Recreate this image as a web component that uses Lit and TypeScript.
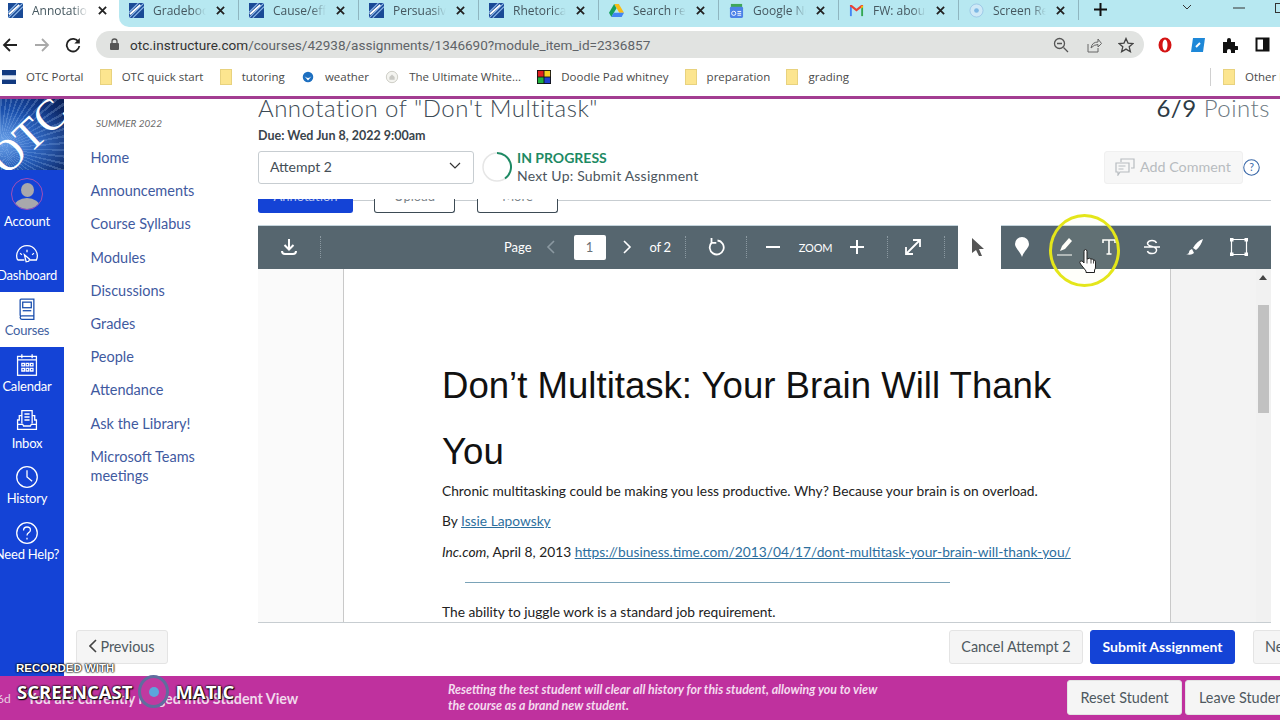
import { LitElement, css, html, svg } from "lit";
import { customElement } from "lit/decorators.js";

const otcFavicon = html`<svg class="fav" viewBox="0 0 16 16"><rect width="16" height="16" fill="#1a4a96"/><path d="M0 16 16 0M4 16 16 4M0 10 10 0" stroke="#8fb8e8" stroke-width="1.2"/><path d="M1 12 12 2" stroke="#fff" stroke-width="2"/></svg>`;

const driveIcon = html`<svg class="fav" viewBox="0 0 16 16"><path d="M5.500 1h5L16 10.500h-5z" fill="#f9bc15"/><path d="M5.500 1 0 10.500 2.500 15 8 5.500z" fill="#16a05d"/><path d="M2.500 15h11l2.500-4.500H5z" fill="#4285f4"/></svg>`;
const newsIcon = html`<svg class="fav" viewBox="0 0 16 16"><rect x="2" y="1" width="12" height="5" fill="#3fa757"/><rect x="1" y="4" width="14" height="12" rx="1.500" fill="#4c82e8"/><path d="M9 9h4M9 11h4M9 13h4" stroke="#fff"/><circle cx="5" cy="11" r="2.200" fill="none" stroke="#fff"/></svg>`;
const gmailIcon = html`<svg class="fav" viewBox="0 0 16 16"><path d="M1 14V3l2 0 0 11z" fill="#4285f4"/><path d="M13 14V3h2v11z" fill="#34a853"/><path d="M1 3.500 8 9l7-5.500V2l-2 0-5 4-5-4H1z" fill="#ea4335"/><path d="M13 3h2v1.500l-2 1.500z" fill="#fbbc05"/></svg>`;
const screenIcon = html`<svg class="fav" viewBox="0 0 16 16"><circle cx="8" cy="8" r="7" fill="#cfe9f7" stroke="#9cc8e6"/><circle cx="8" cy="8" r="2.500" fill="#7db8e4"/></svg>`;

const folder = html`<svg class="bm-ico" viewBox="0 0 12 16"><rect x="0.500" y="0.500" width="11" height="15" fill="#fce58f" stroke="#e8d27e"/></svg>`;

const tabs = [
  { title: "Gradebook", icon: otcFavicon },
  { title: "Cause/effect", icon: otcFavicon },
  { title: "Persuasive", icon: otcFavicon },
  { title: "Rhetorical", icon: otcFavicon },
  { title: "Search results", icon: driveIcon },
  { title: "Google News", icon: newsIcon },
  { title: "FW: about it", icon: gmailIcon },
  { title: "Screen Recorder", icon: screenIcon },
];

const bookmarks = [
  { label: "OTC Portal", icon: html`<svg class="bm-ico wide" viewBox="0 0 16 16"><rect width="16" height="16" fill="#123a80"/><rect y="6" width="16" height="5" fill="#e8eef8"/></svg>` },
  { label: "OTC quick start", icon: folder },
  { label: "tutoring", icon: folder },
  { label: "weather", icon: html`<svg class="bm-ico wide" viewBox="0 0 16 16"><circle cx="8" cy="8" r="6" fill="#1d6fc0"/><path d="M4 7q4 4 8 0l-4 5z" fill="#fff"/></svg>` },
  { label: "The Ultimate White...", icon: html`<svg class="bm-ico wide" viewBox="0 0 16 16"><circle cx="8" cy="8" r="6.500" fill="#f4f4f0" stroke="#c8c8c0"/><path d="M5 11V8l3-3 3 3v3z" fill="#c9c9c4"/></svg>` },
  { label: "Doodle Pad whitney", icon: html`<svg class="bm-ico wide" viewBox="0 0 16 16"><rect width="16" height="16" fill="#111"/><rect x="1" y="1" width="6.500" height="6.500" fill="#e02020"/><rect x="8.500" y="1" width="6.500" height="6.500" fill="#f4d020"/><rect x="1" y="8.500" width="6.500" height="6.500" fill="#20b040"/><rect x="8.500" y="8.500" width="6.500" height="6.500" fill="#2040d0"/></svg>` },
  { label: "preparation", icon: folder },
  { label: "grading", icon: folder },
];

const navIcons = {
  dashboard: svg`<path d="M3 21A12 12 0 1 1 25 21H17M3 21H11" /><path d="M14 9v3M6 13l2 2M22 13l-2 2" /><path d="M11 15l6 5-1 2.500-3 .5z" />`,
  courses: svg`<path d="M6 22V3.500q0-1 1-1H22V22H8q-2 0-2 2t2 2H22v-4" /><rect x="9" y="6" width="10" height="6.500" /><path d="M9 16h10" />`,
  calendar: svg`<rect x="3" y="4" width="22" height="22" /><path d="M3 8h22M8 1.500V6M20 1.500V6" /><path d="M8 12h3v3H8zM13 12h3v3h-3zM18 12h3v3h-3zM8 18h3v3H8zM13 18h3v3h-3zM18 18h3v3h-3z" />`,
  inbox: svg`<path d="M8 18V3h12v15M11 7h6M11 10.500h6M11 14h6" /><path d="M8 9H5v5H3v11h22V14h-2V9h-3M3 19h6l1 2h8l1-2h6" />`,
  history: svg`<circle cx="14" cy="14" r="12" /><path d="M14 6v8l6 5" />`,
  help: svg`<circle cx="14" cy="14" r="12" /><path d="M10 11q0-4 4-4t4 3.500q0 2-2 3t-2 3.500M14 19.500v2" />`,
};

const courseLinks = ["Home", "Announcements", "Course Syllabus", "Modules", "Discussions", "Grades", "People", "Attendance", "Ask the Library!", "Microsoft Teams meetings"];

@customElement("app-root")
export class AppRoot extends LitElement {
  static styles = css`
    :host {
      display: block;
      width: 1280px;
      height: 720px;
      overflow: hidden;
      position: relative;
      background: #fff;
      font-family: Lato, "Liberation Sans", sans-serif;
      color: #2d3b45;
    }
    .page {
      display: flex;
      flex-direction: column;
      height: 720px;
    }

    /* browser chrome */
    .tabstrip {
      display: flex;
      height: 27px;
      background: #fff;
      flex: none;
    }
    .tab {
      box-sizing: border-box;
      width: 120px;
      height: 20px;
      flex: none;
      display: flex;
      align-items: center;
      padding: 0 13px 0 10px;
      gap: 9px;
      font-family: "Open Sans", sans-serif;
      font-size: 12px;
      color: #45575f;
      border-right: 1px solid #8fb6c0;
    }
    .tab.first {
      width: 119px;
      border-right: 0;
      padding: 0 12px 0 8px;
    }
    .tab-rest {
      flex: 1;
      min-width: 0;
      height: 27px;
      display: flex;
      background: #b7e8f1;
      border-bottom-left-radius: 10px;
      overflow: hidden;
    }
    .tab .name {
      flex: 1;
      min-width: 0;
      overflow: hidden;
      white-space: nowrap;
      -webkit-mask-image: linear-gradient(to right, #000 72%, transparent 98%);
      mask-image: linear-gradient(to right, #000 72%, transparent 98%);
    }
    .fav { width: 15px; height: 15px; flex: none; }
    .x { width: 9px; height: 9px; flex: none; }
    .newtab { margin: 3px 0 0 15px; width: 13px; height: 13px; flex: none; }
    .chev { margin: 4px 0 0 75px; flex: none; }
    .minim { margin: 7px 0 0 41px; flex: none; }
    .restore { margin: 3px 0 0 30px; flex: none; }

    .toolbar {
      flex: none;
      height: 35px;
      background: #fff;
      display: flex;
      align-items: center;
      box-sizing: border-box;
    }
    .navbtns { display: flex; width: 96px; flex: none; padding-left: 2px; box-sizing: border-box; gap: 15.500px; align-items: center; }
    .navbtns svg { width: 16px; height: 16px; }
    .omni {
      width: 1048px;
      flex: none;
      height: 27px;
      border-radius: 14px;
      background: #e1e3e1;
      display: flex;
      align-items: center;
      padding: 0 10px 0 13px;
      box-sizing: border-box;
      font-family: Roboto, sans-serif;
      font-size: 13.570px;
      color: #5f6368;
      gap: 10px;
    }
    .omni .host { color: #333; }
    .omni .url { flex: 1; white-space: nowrap; }
    .omni-tools { display: flex; gap: 16.500px; align-items: center; }
    .omni-tools svg { width: 16px; height: 16px; }
    .ext { display: flex; gap: 16.500px; margin-left: 13px; align-items: center; }
    .ext svg { width: 16px; height: 16px; }

    .bookmarks {
      flex: none;
      height: 34px;
      background: #fff;
      display: flex;
      align-items: center;
      padding: 0 0 5px 2px;
      font-family: "Open Sans", sans-serif;
      font-size: 11.500px;
      color: #4a4a4a;
      box-sizing: border-box;
    }
    .bm { display: flex; align-items: center; gap: 10px; white-space: nowrap; margin-right: 16.200px; }
    .bm-ico { width: 12px; height: 16px; flex: none; }
    .bm-ico.wide { width: 14px; height: 14px; }
    .bm-other {
      margin-left: auto;
      box-sizing: border-box;
      display: flex;
      align-items: center;
      gap: 10px;
      border-left: 1px solid #d0d0d0;
      padding-left: 12px;
      height: 18px;
      width: 70px;
      overflow: hidden;
      white-space: nowrap;
    }

    .accent { flex: none; height: 3px; background: #a33d92; }

    .body {
      flex: 1;
      min-height: 0;
      display: flex;
    }

    /* canvas global nav */
    .gnav {
      width: 64px;
      flex: none;
      background: #1443d6;
      display: flex;
      flex-direction: column;
      overflow: hidden;
      color: #fff;
      font-size: 13px;
    }
    .logo {
      width: 64px;
      height: 71px;
      flex: none;
      background:
        radial-gradient(ellipse 90px 50px at 60% 62%, rgba(90, 150, 235, 0.4) 0, rgba(90, 150, 235, 0) 70%),
        repeating-conic-gradient(from 300deg at 0% 70%, rgba(190, 220, 255, 0.22) 0 2deg, rgba(190, 220, 255, 0) 2deg 6deg),
        radial-gradient(circle at 5% 60%, #6fa4e8 0, #1a50ad 42%, #0d2f78 75%, #0a1f52 100%);
      position: relative;
      overflow: hidden;
    }
    .logo span {
      position: absolute;
      left: 29px;
      top: 37px;
      font-family: "Liberation Serif", serif;
      font-size: 44px;
      line-height: 44px;
      color: #fff;
      transform: translate(-50%, -50%) rotate(-43deg);
    }
    .gitem {
      box-sizing: border-box;
      width: 64px;
      padding-right: 10px;
      display: flex;
      flex-direction: column;
      align-items: center;
      white-space: nowrap;
      color: #fff;
      flex: none;
    }
    .gitem svg {
      width: 24px;
      height: 24px;
      fill: none;
      stroke: #fff;
      stroke-width: 1.500;
      flex: none;
    }
    .gitem.active { background: #fff; color: #3f5f9f; }
    .gitem.active svg { stroke: #1a4fae; }
    .gitem .label { line-height: 15px; margin-top: 2px; letter-spacing: -0.200px; }
    .gitem .label.acct { margin-top: 3.500px; }
    .gitem.low .label { margin-top: 3.500px; }
    .avatar {
      box-sizing: border-box;
      width: 32px;
      height: 32px;
      flex: none;
      border-radius: 50%;
      border: 1px solid #a14fb8;
      background: #1443d6;
      overflow: hidden;
      position: relative;
    }
    .avatar::before {
      content: "";
      position: absolute;
      left: 9px;
      top: 4px;
      width: 13px;
      height: 14px;
      border-radius: 50%;
      background: #a8a8ac;
    }
    .avatar::after {
      content: "";
      position: absolute;
      left: 2px;
      top: 19px;
      width: 26px;
      height: 18px;
      border-radius: 50%;
      background: #a8a8ac;
    }

    .rightcol {
      flex: 1;
      min-width: 0;
      display: flex;
      flex-direction: column;
    }
    .upper {
      flex: 1;
      min-height: 0;
      display: flex;
    }

    /* course nav */
    .cnav {
      width: 194px;
      flex: none;
      box-sizing: border-box;
      padding: 18px 0 0 26.500px;
      font-size: 14.500px;
      color: #3f5a9f;
    }
    .term {
      font-size: 10px;
      font-style: italic;
      color: #6b6b6b;
      padding-left: 5.500px;
      height: 16px;
      line-height: 13px;
      margin-bottom: 15px;
    }
    .clink { line-height: 19px; margin-bottom: 14.200px; width: 130px; }

    /* main column */
    .main {
      flex: 1;
      min-width: 0;
      display: flex;
      flex-direction: column;
      overflow: hidden;
    }
    .headwrap {
      flex: none;
      width: 1012px;
      height: 100px;
      overflow: hidden;
    }
    .titlerow {
      display: flex;
      justify-content: space-between;
      font-size: 24px;
      font-weight: 300;
      line-height: 20px;
      color: #3d4b55;
      height: 20px;
      margin-top: -1px;
      letter-spacing: 0.500px;
      white-space: nowrap;
    }
    .pts b { font-weight: 400; color: #2d3b45; }
    .pts { color: #6b7780; }
    .due { font-size: 12.500px; font-weight: 700; margin-top: 10px; line-height: 16px; color: #3a444c; }
    .attempt-row { display: flex; align-items: center; margin-top: 5px; }
    .select {
      box-sizing: border-box;
      width: 216px;
      height: 33px;
      border: 1px solid #c7cdd1;
      border-radius: 3px;
      display: flex;
      align-items: center;
      justify-content: space-between;
      padding: 0 8px 2px 11px;
      font-size: 14px;
      color: #444e56;
    }
    .progress { display: flex; align-items: center; margin-left: 7px; gap: 4px; }
    .progress svg { width: 32px; height: 32px; }
    .ptext { line-height: 18px; font-size: 14px; color: #4b555d; letter-spacing: 0.200px; }
    .ptext b { color: #1d8a64; display: block; letter-spacing: 0; }
    .add {
      margin-left: auto;
      display: flex;
      align-items: center;
    }
    .addbtn {
      box-sizing: border-box;
      width: 139px;
      height: 33px;
      background: #f7f7f7;
      border: 1px solid #f0f0f0;
      border-radius: 3px;
      display: flex;
      align-items: center;
      gap: 5px;
      padding: 0 0 1px 10px;
      font-size: 14.300px;
      color: #b7bcc0;
    }
    .help {
      width: 17px;
      height: 17px;
      margin: 0 10px 0 0;
    }

    /* tab buttons scrolled under the sticky header, only their bottoms show */
    .tabs-clip {
      flex: none;
      width: 1013px;
      display: flex;
      position: relative;
      height: 14px;
      background: linear-gradient(#c7cdd1, #c7cdd1) 0 1px / 100% 1px no-repeat;
    }
    .tabs-clip span {
      box-sizing: border-box;
      height: 14px;
      border: 1px solid #3d4b55;
      border-top: 0;
      border-radius: 0 0 3px 3px;
      background: #fff;
      font-size: 13px;
      color: #7a8288;
      display: block;
      text-align: center;
      overflow: hidden;
    }
    .tabs-clip i {
      display: block;
      font-style: normal;
      line-height: 14px;
      margin-top: -10px;
    }
    .tabs-clip .t1 { width: 95px; background: #1443d6; border-color: #1443d6; color: #bcc8ee; }
    .tabs-clip .t2 { width: 81px; margin-left: 21px; }
    .tabs-clip .t3 { width: 81px; margin-left: 22px; }

    /* document viewer */
    .viewer {
      flex: 1;
      min-height: 0;
      width: 1013px;
      margin-top: 12px;
      display: flex;
      flex-direction: column;
      position: relative;
    }
    .vbar {
      flex: none;
      height: 44px;
      display: flex;
      align-items: stretch;
      color: #fff;
      font-size: 13px;
    }
    .vbar-left {
      width: 700px;
      flex: none;
      background: #56666f;
      box-shadow: inset 0 1px 0 #c4d4dc;
      display: flex;
      align-items: center;
    }
    .vbar-right {
      flex: 1;
      margin-left: 43px;
      background: #56666f;
      box-shadow: inset 0 1px 0 #c4d4dc;
      display: flex;
      align-items: center;
    }
    .vsep { width: 0; height: 22px; border-left: 1px dotted #8b99a1; flex: none; }
    .vbar svg { flex: none; }
    .pageno {
      box-sizing: border-box;
      width: 32px;
      height: 25px;
      background: #fff;
      border-radius: 2px;
      color: #6a7277;
      text-align: center;
      line-height: 25px;
      font-size: 13px;
      flex: none;
    }
    .zoomlabel { font-size: 11px; letter-spacing: -0.200px; }
    .pointer { position: absolute; left: 713px; top: 12px; width: 14px; height: 20px; }

    .vbody {
      flex: 1;
      min-height: 0;
      display: flex;
      overflow: hidden;
      border-bottom: 1px solid #c7cdd1;
    }
    .gutter { width: 85px; flex: none; background: #fafafa; }
    .sheet {
      width: 828px;
      flex: none;
      box-sizing: border-box;
      border-left: 1px solid #c9c9c9;
      border-right: 1px solid #c9c9c9;
      padding: 84px 0 0 98px;
      background: #fff;
      font-family: Lato, sans-serif;
      font-size: 13.750px;
      color: #222;
    }
    .sheet h1 {
      font-family: "Liberation Sans", sans-serif;
      font-size: 36.600px;
      font-weight: 400;
      line-height: 66px;
      margin: 0 0 -3px;
      width: 640px;
      color: #111;
    }
    .sheet p { margin: 0 0 13.300px; line-height: 17px; white-space: nowrap; }
    .sheet a { color: #2d6f9e; text-decoration: underline; }
    .rule { width: 485px; height: 1px; background: #7aa3b8; margin: 22px 0 20px 23px; }
    .rightpad {
      flex: 1;
      background: #f3f3f3;
      position: relative;
    }
    .scroll {
      position: absolute;
      right: 0;
      top: 0;
      bottom: 0;
      width: 15px;
      background: #f1f1f1;
    }
    .scroll .arrow {
      position: absolute;
      left: 3px;
      top: 6px;
      border: 4px solid transparent;
      border-top: 0;
      border-bottom: 5px solid #444;
    }
    .scroll .thumb {
      position: absolute;
      left: 2px;
      top: 36px;
      width: 11px;
      height: 108px;
      background: #c1c1c1;
    }

    .foot {
      flex: none;
      height: 53px;
      box-sizing: border-box;
      display: flex;
      align-items: flex-start;
      padding: 7px 0 0 12px;
      overflow: hidden;
      white-space: nowrap;
      font-size: 14.400px;
    }
    .btn {
      box-sizing: border-box;
      height: 34px;
      flex: none;
      border: 1px solid #e4e4e4;
      border-radius: 3px;
      background: #f5f5f5;
      color: #4f5960;
      padding-bottom: 2px;
      display: flex;
      align-items: center;
      justify-content: center;
    }
    .prev { width: 92px; gap: 3px; }
    .cancel { width: 134px; margin-left: auto; }
    .submit { width: 145px; margin-left: 7px; background: #1443d6; border-color: #1443d6; color: #fff; font-weight: 700; font-size: 14px; }
    .next { width: 60px; margin-left: 18px; margin-right: -33px; justify-content: flex-start; padding-left: 11px; }

    /* student view bar */
    .student {
      position: absolute;
      left: 0;
      right: 0;
      bottom: 0;
      height: 44px;
      background: #bf319e;
      color: #fff;
      display: flex;
      align-items: center;
      white-space: nowrap;
      overflow: hidden;
    }
    .student .cut { width: 27px; flex: none; font-size: 12px; color: #e8cfe2; margin-left: -3px; padding-right: 3px; box-sizing: content-box; }
    .student .msg { font-size: 14.300px; font-weight: 700; color: #f1d9ec; width: 421px; flex: none; }
    .student .note { font-size: 12.400px; font-style: italic; font-weight: 700; line-height: 16px; color: #f4dcef; width: 619px; flex: none; }
    .student .sbtn {
      box-sizing: border-box;
      height: 35px;
      margin-bottom: 2px;
      background: #f5f5f5;
      border: 1px solid #e4e4e4;
      border-radius: 3px;
      color: #4f5960;
      font-size: 14.400px;
      display: flex;
      align-items: center;
      justify-content: center;
      flex: none;
    }
    .student .reset { width: 115px; }
    .student .leave { width: 120px; margin-left: 3px; justify-content: flex-start; padding-left: 13px; }

    /* overlays */
    .rec-top {
      position: absolute;
      left: 16px;
      top: 661px;
      font-family: "Liberation Sans", sans-serif;
      font-weight: 700;
      font-size: 11.500px;
      color: #fff;
      text-shadow: 0 0 2px #000, 0 0 2px #000, 0 0 1px #000;
      line-height: 14px;
    }
    .rec-main {
      position: absolute;
      left: 17px;
      top: 675px;
      display: flex;
      align-items: center;
      font-family: "Open Sans", sans-serif;
      font-weight: 700;
      font-size: 18.500px;
      color: #fff;
      text-shadow: 0 0 2px #000, 0 0 2px #000, 1px 1px 1px #000;
      line-height: 33px;
      gap: 6px;
    }
    .rec-dot {
      box-sizing: border-box;
      width: 31px;
      height: 33px;
      border-radius: 50%;
      background: #c03aa0;
      border: 3px solid #5f6d9e;
      display: flex;
      align-items: center;
      justify-content: center;
      flex: none;
    }
    .rec-dot i { width: 10px; height: 10px; border-radius: 50%; background: #5ba6dc; display: block; }
    .spot {
      position: absolute;
      left: 1049px;
      top: 214px;
      width: 71px;
      height: 73px;
      box-sizing: border-box;
      border-radius: 50%;
      border: 3px solid #e4e61a;
      background: rgba(250, 250, 190, 0.07);
    }
    .hand { position: absolute; left: 1079px; top: 249px; width: 17px; height: 24px; }
  `;

  private closeIcon(color = "#222") {
    return html`<svg class="x" viewBox="0 0 10 10"><path d="M1 1l8 8M9 1l-8 8" stroke=${color} stroke-width="2"/></svg>`;
  }

  private renderTabs() {
    return html`
      <div class="tabstrip">
        <div class="tab first">${otcFavicon}<span class="name">Annotation of</span>${this.closeIcon()}</div>
        <div class="tab-rest">
          ${tabs.map(
            (t) => html`<div class="tab">${t.icon}<span class="name">${t.title}</span>${this.closeIcon()}</div>`
          )}
          <svg class="newtab" viewBox="0 0 13 13"><path d="M6.500 0v13M0 6.500h13" stroke="#111" stroke-width="2"/></svg>
          <svg class="chev" width="10" height="6" viewBox="0 0 10 6"><path d="M1 1l4 4 4-4" fill="none" stroke="#333"/></svg>
          <svg class="minim" width="12" height="2" viewBox="0 0 12 2"><path d="M0 1h12" stroke="#333"/></svg>
          <svg class="restore" width="10" height="10" viewBox="0 0 10 10"><rect x="0.500" y="0.500" width="9" height="9" fill="none" stroke="#333"/></svg>
        </div>
      </div>
    `;
  }

  private renderToolbar() {
    return html`
      <div class="toolbar">
        <div class="navbtns">
          <svg viewBox="0 0 16 16"><path d="M15 8H2M8 2 2 8l6 6" fill="none" stroke="#222" stroke-width="1.800"/></svg>
          <svg viewBox="0 0 16 16"><path d="M1 8h13M8 2l6 6-6 6" fill="none" stroke="#a9a9a9" stroke-width="1.800"/></svg>
          <svg viewBox="0 0 16 16"><path d="M13.500 5A6.300 6.300 0 1 0 14.300 9" fill="none" stroke="#222" stroke-width="1.800"/><path d="M14.800 1v5.500H9.300z" fill="#222"/></svg>
        </div>
        <div class="omni">
          <svg width="11" height="13" viewBox="0 0 11 13"><rect x="1" y="5" width="9" height="7" rx="1" fill="#555"/><path d="M3 5V3.500a2.500 2.500 0 0 1 5 0V5" fill="none" stroke="#555" stroke-width="1.300"/></svg>
          <span class="url"><span class="host">otc.instructure.com</span>/courses/42938/assignments/1346690?module_item_id=2336857</span>
          <div class="omni-tools">
            <svg viewBox="0 0 16 16"><circle cx="6.500" cy="6.500" r="5" fill="none" stroke="#555" stroke-width="1.300"/><path d="M4 6.500h5M10.500 10.500 15 15" stroke="#555" stroke-width="1.300"/></svg>
            <svg viewBox="0 0 16 16"><path d="M2 7v8h10v-4M5 11q1-6 7-6V2l3.500 4.500L12 10V7.500q-4 0-7 3.500z" fill="none" stroke="#666"/></svg>
            <svg viewBox="0 0 16 16"><path d="M8 1.500l2 4.600 5 .4-3.800 3.300 1.200 4.900L8 12.100l-4.400 2.600 1.200-4.900L1 6.500l5-.4z" fill="none" stroke="#444" stroke-width="1.300"/></svg>
          </div>
        </div>
        <div class="ext">
          <svg viewBox="0 0 16 16"><ellipse cx="8" cy="8" rx="6.500" ry="7.500" fill="#d41313"/><ellipse cx="8" cy="8" rx="2.500" ry="5.500" fill="#fff"/></svg>
          <svg viewBox="0 0 16 16"><path d="M3 1h12l-2 14H1z" fill="#1e88d8"/><path d="M6 10l4-4" stroke="#fff" stroke-width="2"/></svg>
          <svg viewBox="0 0 16 16"><path d="M1 5h4V3a2 2 0 0 1 4 0v2h4v4h2a2 2 0 0 1 0 4h-2v3H9v-2a2 2 0 0 0-4 0v2H1z" fill="#111"/></svg>
          <svg viewBox="0 0 16 16"><rect x="1.500" y="1.500" width="12" height="12" fill="#fff" stroke="#111" stroke-width="2"/><rect x="8" y="1.500" width="5.500" height="12" fill="#111"/></svg>
        </div>
      </div>
    `;
  }

  private renderBookmarks() {
    return html`
      <div class="bookmarks">
        ${bookmarks.map((b) => html`<div class="bm">${b.icon}<span>${b.label}</span></div>`)}
        <div class="bm-other">${folder}<span>Other bookmarks</span></div>
      </div>
    `;
  }

  private renderGlobalNav() {
    const item = (icon: keyof typeof navIcons, label: string, h: number, top: number, extra = "") => html`
      <div class="gitem ${extra}" style="height:${h}px;padding-top:${top}px">
        <svg viewBox="0 0 28 28">${navIcons[icon]}</svg>
        <span class="label">${label}</span>
      </div>
    `;
    return html`
      <nav class="gnav">
        <div class="logo"><span>OTC</span></div>
        <div class="gitem" style="height:65px;padding-top:8px">
          <div class="avatar"></div>
          <span class="label acct">Account</span>
        </div>
        ${item("dashboard", "Dashboard", 57, 7)}
        ${item("courses", "Courses", 55, 5, "active")}
        ${item("calendar", "Calendar", 56, 6)}
        ${item("inbox", "Inbox", 57, 5, "low")}
        ${item("history", "History", 56, 5)}
        ${item("help", "Need Help?", 56, 5)}
      </nav>
    `;
  }

  private renderCourseNav() {
    return html`
      <nav class="cnav">
        <div class="term">SUMMER 2022</div>
        ${courseLinks.map((l) => html`<div class="clink">${l}</div>`)}
      </nav>
    `;
  }

  private renderHeader() {
    return html`
      <div class="headwrap">
        <div class="titlerow">
          <span>Annotation of "Don't Multitask"</span>
          <span class="pts"><b>6/9</b> Points</span>
        </div>
        <div class="due">Due: Wed Jun 8, 2022 9:00am</div>
        <div class="attempt-row">
          <div class="select">
            <span>Attempt 2</span>
            <svg width="20" height="20" viewBox="0 0 20 20"><path d="M5 7l5 5 5-5" fill="none" stroke="#333" stroke-width="1.200"/></svg>
          </div>
          <div class="progress">
            <svg viewBox="0 0 32 32"><circle cx="16" cy="16" r="14" fill="none" stroke="#e6e6e6" stroke-width="1.500"/><path d="M16 2a14 14 0 0 1 8 25.500" fill="none" stroke="#1d8a64" stroke-width="2"/></svg>
            <div class="ptext"><b>IN PROGRESS</b>Next Up: Submit Assignment</div>
          </div>
          <div class="add">
            <div class="addbtn">
              <svg width="20" height="18" viewBox="0 0 20 18"><path d="M6 4V1h13v9h-3M1 5h13v9H5l-2 3v-3H1z" fill="none" stroke="#b7bcc0" stroke-width="1.200"/><path d="M3.500 8h7M3.500 11h5" stroke="#b7bcc0"/></svg>
              <span>Add Comment</span>
            </div>
            <svg class="help" viewBox="0 0 16 16"><circle cx="8" cy="8" r="7.300" fill="none" stroke="#3a68a8"/><text x="8" y="11.500" text-anchor="middle" font-size="10" font-family="Lato" fill="#3a68a8">?</text></svg>
          </div>
        </div>
      </div>
      <div class="tabs-clip">
        <span class="t1"><i>Annotation</i></span>
        <span class="t2"><i>Upload</i></span>
        <span class="t3"><i>More</i></span>
      </div>
    `;
  }

  private renderViewerBar() {
    const ico = (d: string, left: number, size = 20, sw = 2) => html`<svg style="margin-left:${left}px" width=${size} height=${size} viewBox="0 0 20 20"><path d=${d} fill="none" stroke="#fff" stroke-width=${sw}/></svg>`;
    return html`
      <div class="vbar">
        <div class="vbar-left">
          ${ico("M10 2v10M5.500 8l4.500 4.500L14.500 8M3 14q0 3 3 3h8q3 0 3-3", 21)}
          <span class="vsep" style="margin-left:21px"></span>
          <span style="margin-left:183px">Page</span>
          <svg style="margin-left:13px" width="12" height="16" viewBox="0 0 12 16"><path d="M9 2 3 8l6 6" fill="none" stroke="#8b99a1" stroke-width="1.600"/></svg>
          <span class="pageno" style="margin-left:17px">1</span>
          <svg style="margin-left:15px" width="12" height="16" viewBox="0 0 12 16"><path d="M3 2l6 6-6 6" fill="none" stroke="#fff" stroke-width="1.600"/></svg>
          <span style="margin-left:17px;letter-spacing:-0.300px">of 2</span>
          <span class="vsep" style="margin-left:14px"></span>
          ${ico("M10.500 3.500A7 7 0 1 1 4.800 5.500M4.500 1v4.800h4.800", 21, 20, 1.800)}
          <span class="vsep" style="margin-left:19px"></span>
          ${ico("M3 10h14", 16)}
          <span class="zoomlabel" style="margin-left:16px">ZOOM</span>
          ${ico("M10 3v14M3 10h14", 15)}
          <span class="vsep" style="margin-left:20px"></span>
          ${ico("M3 17 17 3M10 3h7v7M3 10v7h7", 15, 20, 1.800)}
          <span class="vsep" style="margin-left:21px"></span>
        </div>
        <div class="vbar-right">
          <svg style="margin-left:11px" width="20" height="22" viewBox="0 0 20 22"><path d="M10 21C8 15 3 12 3 8a7 7 0 0 1 14 0c0 4-5 7-7 13z" fill="#fff"/></svg>
          <svg style="margin-left:24px" width="20" height="22" viewBox="0 0 20 22"><path d="M4 15l2-5 7-8 3 3-7 8z" fill="#fff"/><path d="M1 19h15" stroke="#fff"/></svg>
          <svg style="margin-left:23px" width="20" height="20" viewBox="0 0 20 20"><path d="M4 6V3h12v3M10 3v14M7.500 17h5" fill="none" stroke="#fff" stroke-width="1.600"/></svg>
          <svg style="margin-left:23px" width="20" height="20" viewBox="0 0 20 20"><path d="M14.500 6q-1-2.500-4.500-2.500T5.500 6q0 2.500 4.500 3.500 5 1 4.500 4-.5 3-4.500 3T5.500 14M2 10h16" fill="none" stroke="#fff" stroke-width="1.500"/></svg>
          <svg style="margin-left:23px" width="20" height="20" viewBox="0 0 20 20"><path d="M18 2q-6 2-10 9l3 2q5-4 7-11zM7 12q-3 1-3 3t-3 2q5 2 8-1z" fill="#fff"/></svg>
          <svg style="margin-left:24px" width="20" height="20" viewBox="0 0 20 20"><path d="M2.500 2.500h15v15h-15z" fill="none" stroke="#fff" stroke-width="1.200"/><path d="M1 1h3.500v3.500H1zM15.500 1H19v3.500h-3.500zM1 15.500h3.500V19H1zM15.500 15.500H19V19h-3.500z" fill="#fff"/></svg>
        </div>
        <svg class="pointer" viewBox="0 0 14 20"><path d="M1 1l12 11H8l3 7-3 0-3-6-4 3z" fill="#555"/></svg>
      </div>
    `;
  }

  private renderViewer() {
    return html`
      <div class="viewer">
        ${this.renderViewerBar()}
        <div class="vbody">
          <div class="gutter"></div>
          <div class="sheet">
            <h1>Don’t Multitask: Your Brain Will Thank You</h1>
            <p>Chronic multitasking could be making you less productive. Why? Because your brain is on overload.</p>
            <p>By <a>Issie Lapowsky</a></p>
            <p><i>Inc.com,</i> April 8, 2013 <a>https://business.time.com/2013/04/17/dont-multitask-your-brain-will-thank-you/</a></p>
            <div class="rule"></div>
            <p>The ability to juggle work is a standard job requirement.</p>
          </div>
          <div class="rightpad"><div class="scroll"><div class="arrow"></div><div class="thumb"></div></div></div>
        </div>
      </div>
    `;
  }

  private renderFoot() {
    return html`
      <div class="foot">
        <div class="btn prev">
          <svg width="8" height="14" viewBox="0 0 8 14"><path d="M7 1 1 7l6 6" fill="none" stroke="#444" stroke-width="1.600"/></svg>
          Previous
        </div>
        <div class="btn cancel">Cancel Attempt 2</div>
        <div class="btn submit">Submit Assignment</div>
        <div class="btn next">Next</div>
      </div>
    `;
  }

  render() {
    return html`
      <div class="page">
        ${this.renderTabs()}
        ${this.renderToolbar()}
        ${this.renderBookmarks()}
        <div class="accent"></div>
        <div class="body">
          ${this.renderGlobalNav()}
          <div class="rightcol">
            <div class="upper">
              ${this.renderCourseNav()}
              <div class="main">
                ${this.renderHeader()}
                ${this.renderViewer()}
              </div>
            </div>
            ${this.renderFoot()}
            <div style="height:44px;flex:none"></div>
          </div>
        </div>
      </div>
      <div class="student">
        <span class="cut">6d</span>
        <span class="msg">You are currently logged into Student View</span>
        <div class="note">Resetting the test student will clear all history for this student, allowing you to view<br />the course as a brand new student.</div>
        <div class="sbtn reset">Reset Student</div>
        <div class="sbtn leave">Leave Student View</div>
      </div>
      <div class="rec-top">RECORDED WITH</div>
      <div class="rec-main">SCREENCAST <span class="rec-dot"><i></i></span> MATIC</div>
      <div class="spot"></div>
      <svg class="hand" viewBox="0 0 17 24"><path d="M5 2.500q0-2 1.500-2T8 2.500V10q3-1.500 4 0 2-.5 2.500 1 2-.5 2 2V18q0 2-1 3v2.500H7V22L1.500 15q-1.500-2 0-3t3.500 2z" fill="#fff" stroke="#222"/><path d="M8 10v4.500M12 10v4.500M14.500 11v3.500" stroke="#222" stroke-width="0.800"/></svg>
    `;
  }
}
